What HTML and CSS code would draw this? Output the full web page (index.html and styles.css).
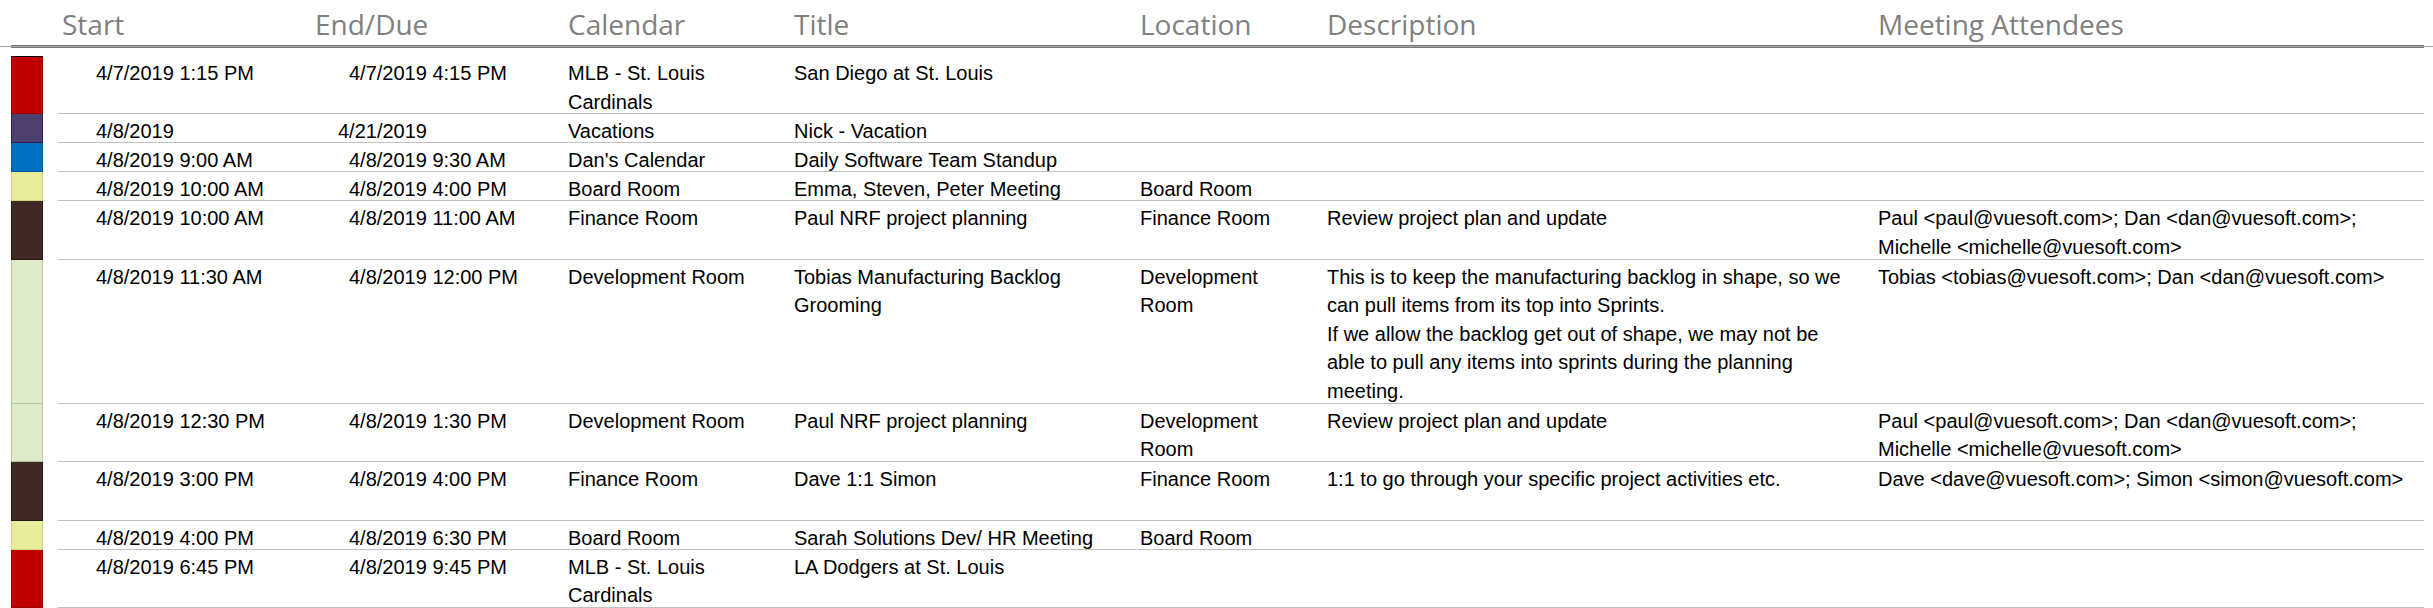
FILE: index.html
```html
<!DOCTYPE html>
<html lang="en">
<head>
<meta charset="utf-8">
<title>Calendar export</title>
<link rel="stylesheet" href="styles.css">
</head>
<body>
<div class="sheet">
  <div class="head-band">
    <div class="head">
      <div class="hcell">Start</div>
      <div class="hcell">End/Due</div>
      <div class="hcell">Calendar</div>
      <div class="hcell">Title</div>
      <div class="hcell">Location</div>
      <div class="hcell">Description</div>
      <div class="hcell">Meeting Attendees</div>
    </div>
  </div>

  <div class="rows">
    <div class="row h2">
      <div class="tag red first"></div>
      <div class="cells">
        <div class="c date">4/7/2019 1:15 PM</div>
        <div class="c date">4/7/2019 4:15 PM</div>
        <div class="c">MLB - St. Louis<br>Cardinals</div>
        <div class="c">San Diego at St. Louis</div>
        <div class="c"></div>
        <div class="c"></div>
        <div class="c"></div>
      </div>
    </div>

    <div class="row h1">
      <div class="tag purple"></div>
      <div class="cells">
        <div class="c date">4/8/2019</div>
        <div class="c date short">4/21/2019</div>
        <div class="c">Vacations</div>
        <div class="c">Nick - Vacation</div>
        <div class="c"></div>
        <div class="c"></div>
        <div class="c"></div>
      </div>
    </div>

    <div class="row h1">
      <div class="tag blue"></div>
      <div class="cells">
        <div class="c date">4/8/2019 9:00 AM</div>
        <div class="c date">4/8/2019 9:30 AM</div>
        <div class="c">Dan's Calendar</div>
        <div class="c">Daily Software Team Standup</div>
        <div class="c"></div>
        <div class="c"></div>
        <div class="c"></div>
      </div>
    </div>

    <div class="row h1">
      <div class="tag yellow"></div>
      <div class="cells">
        <div class="c date">4/8/2019 10:00 AM</div>
        <div class="c date">4/8/2019 4:00 PM</div>
        <div class="c">Board Room</div>
        <div class="c">Emma, Steven, Peter Meeting</div>
        <div class="c">Board Room</div>
        <div class="c"></div>
        <div class="c"></div>
      </div>
    </div>

    <div class="row h2">
      <div class="tag brown"></div>
      <div class="cells">
        <div class="c date">4/8/2019 10:00 AM</div>
        <div class="c date">4/8/2019 11:00 AM</div>
        <div class="c">Finance Room</div>
        <div class="c">Paul NRF project planning</div>
        <div class="c">Finance Room</div>
        <div class="c">Review project plan and update</div>
        <div class="c">Paul &lt;paul@vuesoft.com&gt;; Dan &lt;dan@vuesoft.com&gt;;<br>Michelle &lt;michelle@vuesoft.com&gt;</div>
      </div>
    </div>

    <div class="row h5">
      <div class="tag green"></div>
      <div class="cells">
        <div class="c date">4/8/2019 11:30 AM</div>
        <div class="c date">4/8/2019 12:00 PM</div>
        <div class="c">Development Room</div>
        <div class="c">Tobias Manufacturing Backlog<br>Grooming</div>
        <div class="c">Development<br>Room</div>
        <div class="c">This is to keep the manufacturing backlog in shape, so we<br>can pull items from its top into Sprints.<br>If we allow the backlog get out of shape, we may not be<br>able to pull any items into sprints during the planning<br>meeting.</div>
        <div class="c">Tobias &lt;tobias@vuesoft.com&gt;; Dan &lt;dan@vuesoft.com&gt;</div>
      </div>
    </div>

    <div class="row h2">
      <div class="tag green"></div>
      <div class="cells">
        <div class="c date">4/8/2019 12:30 PM</div>
        <div class="c date">4/8/2019 1:30 PM</div>
        <div class="c">Development Room</div>
        <div class="c">Paul NRF project planning</div>
        <div class="c">Development<br>Room</div>
        <div class="c">Review project plan and update</div>
        <div class="c">Paul &lt;paul@vuesoft.com&gt;; Dan &lt;dan@vuesoft.com&gt;;<br>Michelle &lt;michelle@vuesoft.com&gt;</div>
      </div>
    </div>

    <div class="row h2">
      <div class="tag brown"></div>
      <div class="cells">
        <div class="c date">4/8/2019 3:00 PM</div>
        <div class="c date">4/8/2019 4:00 PM</div>
        <div class="c">Finance Room</div>
        <div class="c">Dave 1:1 Simon</div>
        <div class="c">Finance Room</div>
        <div class="c">1:1 to go through your specific project activities etc.</div>
        <div class="c">Dave &lt;dave@vuesoft.com&gt;; Simon &lt;simon@vuesoft.com&gt;</div>
      </div>
    </div>

    <div class="row h1">
      <div class="tag yellow"></div>
      <div class="cells">
        <div class="c date">4/8/2019 4:00 PM</div>
        <div class="c date">4/8/2019 6:30 PM</div>
        <div class="c">Board Room</div>
        <div class="c">Sarah Solutions Dev/ HR Meeting</div>
        <div class="c">Board Room</div>
        <div class="c"></div>
        <div class="c"></div>
      </div>
    </div>

    <div class="row h2">
      <div class="tag red"></div>
      <div class="cells">
        <div class="c date">4/8/2019 6:45 PM</div>
        <div class="c date">4/8/2019 9:45 PM</div>
        <div class="c">MLB - St. Louis<br>Cardinals</div>
        <div class="c">LA Dodgers at St. Louis</div>
        <div class="c"></div>
        <div class="c"></div>
        <div class="c"></div>
      </div>
    </div>
  </div>
</div>
</body>
</html>
```

FILE: styles.css
```css
html, body {
  margin: 0;
  padding: 0;
  background: #ffffff;
}

body {
  font-family: "Liberation Sans", Arial, sans-serif;
  color: #000000;
  overflow: hidden;
}

.sheet {
  width: 2433px;
}

/* Header */
.head-band {
  height: 48px;
  margin-bottom: 8px;
  background: linear-gradient(to bottom, transparent 46px, #a6a6a6 46px, #a6a6a6 47px, transparent 47px);
}

.head {
  box-sizing: border-box;
  height: 48px;
  margin: 0 9px 0 11px;
  padding: 8px 0 0 47px;
  display: grid;
  grid-template-columns: 253px 253px 226px 346px 187px 551px 1fr;
  border-bottom: 3px double #7a7a7a;
}

.hcell {
  padding-left: 4px;
  font-family: "Open Sans", "Liberation Sans", sans-serif;
  font-weight: 400;
  font-size: 28px;
  line-height: 32px;
  color: #808080;
  white-space: nowrap;
}

/* Rows */
.row {
  display: flex;
  box-sizing: border-box;
}

.h1 { height: 29px; }
.h2 { height: 58.4px; }
.h5 { height: 144px; }

.tag {
  box-sizing: border-box;
  width: 32px;
  margin: 0 15px 0 11px;
  border-left: 1px solid;
  border-right: 1px solid;
  border-bottom: 1px solid;
  flex: none;
}

.tag.first { border-top: 1px solid; }

.red    { background: #c00000; border-color: #9a0000; }
.purple { background: #4d3f6e; border-color: #2b1e55; }
.blue   { background: #0070c0; border-color: #005c9f; }
.yellow { background: #e6ec9b; border-color: #cfd585; }
.brown  { background: #3f2924; border-color: #2c1915; }
.green  { background: #ddebca; border-color: #b4c8a0; }

.cells {
  flex: 1;
  margin-right: 9px;
  box-sizing: border-box;
  display: grid;
  grid-template-columns: 253px 253px 226px 346px 187px 551px 1fr;
  border-bottom: 1px solid #c0c0c0;
  padding-top: 3px;
}

.c {
  padding-left: 4px;
  font-size: 20px;
  line-height: 28.5px;
  white-space: nowrap;
}

.c.date { padding-left: 38px; }
.c.date.short { padding-left: 27px; }
```
